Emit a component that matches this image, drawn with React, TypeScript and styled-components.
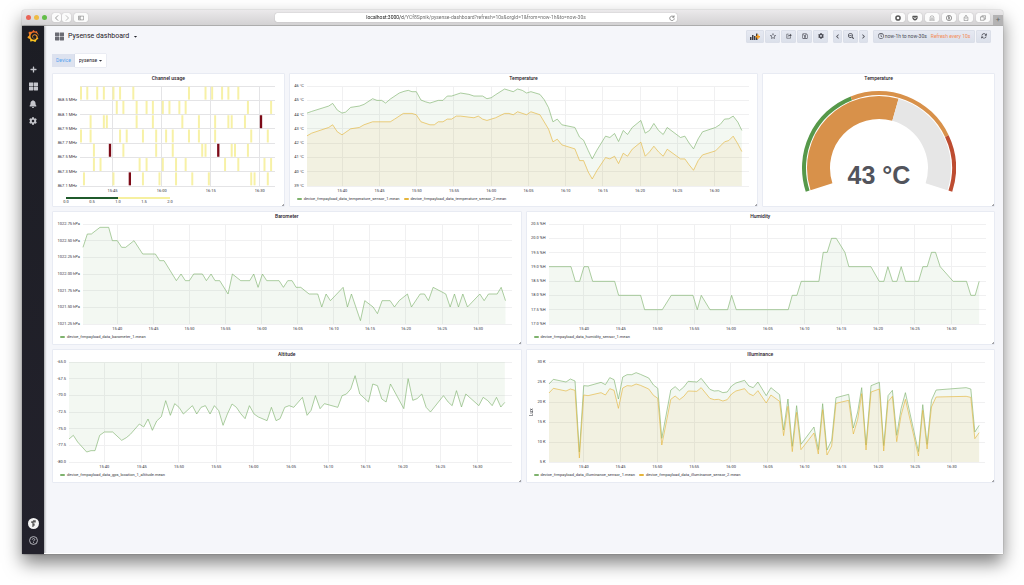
import React from "react";
import styled, { createGlobalStyle } from "styled-components";
import {
  FaBell,
  FaCaretDown,
  FaChevronLeft,
  FaChevronRight,
  FaCog,
  FaGetPocket,
  FaPlus,
  FaRegClock,
  FaRegSave,
  FaRegStar,
  FaSearchMinus,
  FaThLarge,
} from "react-icons/fa";
import { FaArrowsRotate } from "react-icons/fa6";
import { SiGrafana } from "react-icons/si";

const GlobalStyle = createGlobalStyle`
  *, *::before, *::after { box-sizing: border-box; }
  html, body { margin: 0; background: #fff; }
  body { font-family: Roboto, "Liberation Sans", sans-serif; color: #33343c; }
  button, input, select { font: inherit; color: inherit; margin: 0; padding: 0; }
  button { cursor: pointer; }
  a { color: inherit; }
  svg { display: block; flex: none; }
`;

/* ---------- browser window ---------- */

const Desktop = styled.div`
  display: flex;
  min-height: 100vh;
  padding: 10px 21px 31px 22px;
`;

const Window = styled.div`
  flex: 1;
  min-width: 0;
  display: flex;
  flex-direction: column;
  border-radius: 3px 3px 0 0;
  background: #f5f6fa;
  box-shadow: 0 0 1px rgba(0, 0, 0, 0.6), 0 9px 18px rgba(0, 0, 0, 0.5);
`;

const TitleBar = styled.header`
  display: grid;
  grid-template-columns: 253fr 402fr 326fr;
  align-items: center;
  height: 16px;
  border-bottom: 1px solid #adadad;
  border-radius: 3px 3px 0 0;
  background: linear-gradient(#ebe9eb, #d3d2d3);
`;

const BarGroup = styled.div<{ $end?: boolean }>`
  display: flex;
  align-items: center;
  align-self: stretch;
  gap: 3px;
  padding-left: 4px;
  justify-content: ${(p) => (p.$end ? "flex-end" : "flex-start")};
`;

const Light = styled.button<{ $color: string }>`
  width: 5px;
  height: 5px;
  border: 0;
  border-radius: 50%;
  background: ${(p) => p.$color};
`;

const NavPair = styled.div`
  display: flex;
  gap: 1px;
  margin: 0 0 0 2px;
`;

const ChromeButton = styled.button<{ $w?: number }>`
  display: flex;
  align-items: center;
  justify-content: center;
  width: ${(p) => p.$w ?? 14}px;
  height: 9px;
  border: 0;
  border-radius: 2px;
  background: #fbfbfb;
  color: #555;
  box-shadow: 0 0 1px rgba(0, 0, 0, 0.3);
`;

const NewTab = styled.button`
  align-self: flex-end;
  width: 10px;
  height: 10px;
  border: 0;
  background: #b4b3b4;
  color: #666;
  font-size: 8px;
  line-height: 10px;
`;

const AddressBar = styled.div`
  display: flex;
  align-items: center;
  height: 9px;
  padding: 0 2px 0 8px;
  border-radius: 2px;
  background: #fff;
  box-shadow: 0 0 1px rgba(0, 0, 0, 0.35);
`;

const Address = styled.input`
  flex: 1;
  min-width: 0;
  height: 9px;
  border: 0;
  text-align: center;
  font-size: 5px;
  line-height: 9px;
  background: linear-gradient(90deg, #111 calc(50% - 73px), #666 calc(50% - 73px));
  background-clip: text;
  -webkit-background-clip: text;
  -webkit-text-fill-color: transparent;
`;

const ReloadButton = styled.button`
  border: 0;
  background: none;
  color: #555;
`;

const Glyph = ({ size = 6, width = 1.6, children }: { size?: number; width?: number; children: React.ReactNode }) => (
  <svg width={size} height={size} viewBox="0 0 16 16" fill="none" stroke="currentColor" strokeWidth={width} aria-hidden="true">
    {children}
  </svg>
);

/* ---------- side menu ---------- */

const Body = styled.div`
  flex: 1;
  display: flex;
`;

const SideMenu = styled.nav`
  display: flex;
  flex-direction: column;
  justify-content: space-between;
  width: 22px;
  padding: 3px 0 8px;
  background: linear-gradient(#1c1d24, #23222c);
  box-shadow: 1px 0 2px rgba(0, 0, 0, 0.35);
  color: #c4c5cb;
`;

const MenuGroup = styled.div`
  display: flex;
  flex-direction: column;
  align-items: center;
  gap: 6px;
`;

const MenuLink = styled.a`
  display: flex;
  align-items: center;
  justify-content: center;
  width: 22px;
  height: 11px;
`;

const LogoLink = styled(MenuLink)`
  height: 14px;
  margin-bottom: 15px;
`;

const Avatar = styled.span`
  display: flex;
  align-items: center;
  justify-content: center;
  width: 11px;
  height: 11px;
  border-radius: 50%;
  background: #f4f4f4;
  color: #555;
`;

/* ---------- dashboard header ---------- */

const Main = styled.main`
  flex: 1;
  min-width: 0;
  padding: 0 8px;
  border-bottom: 1px solid #fff;
`;

const PageHeader = styled.div`
  display: flex;
  align-items: center;
  justify-content: space-between;
  height: 20px;
  padding: 0 4px 0 3px;
`;

const DashboardPicker = styled.button`
  display: flex;
  align-items: center;
  gap: 4px;
  border: 0;
  background: none;
  font-size: 7px;
  line-height: 12px;
  color: #1f2028;
`;

const Toolbar = styled.div`
  display: flex;
  gap: 5px;
`;

const ToolGroup = styled.div`
  display: flex;
  gap: 1px;
`;

const ToolButton = styled.button<{ $w?: number }>`
  display: flex;
  align-items: center;
  justify-content: center;
  gap: 1px;
  min-width: ${(p) => p.$w ?? 15}px;
  height: 13px;
  border: 1px solid #dbdfe9;
  border-radius: 1px;
  background: linear-gradient(#e6e9f2, #dbe0ea);
  color: #4a4b54;
  font-size: 5px;
  white-space: nowrap;
`;

const RefreshNote = styled.span`
  margin-left: 3px;
  color: #f58b54;
`;

const Variables = styled.div`
  display: flex;
  width: max-content;
  margin: 8px 0 6px;
  font-size: 5px;
  line-height: 13px;
`;

const VariableLabel = styled.label`
  padding: 0 4px;
  background: #dde2ef;
  color: #55a3ef;
`;

const VariableValue = styled.div`
  display: flex;
  align-items: center;
  padding: 0 3px 0 4px;
  background: #fff;
  box-shadow: 0 0 1px #b9bfd0;
`;

const VariableSelect = styled.select`
  appearance: none;
  border: 0;
  background: none;
  line-height: 13px;
  color: #1f2028;
`;

/* ---------- panels ---------- */

const PanelGrid = styled.div`
  display: grid;
  grid-template-columns: repeat(4, minmax(0, 1fr));
  grid-auto-rows: 134px;
  gap: 4px;
`;

const PanelBox = styled.section<{ $span: number }>`
  position: relative;
  grid-column: span ${(p) => p.$span};
  border: 1px solid #e8ebf3;
  border-radius: 1px;
  background: #fff;
`;

const PanelTitle = styled.h2`
  margin: 0;
  padding-bottom: 3px;
  text-align: center;
  font-size: 5px;
  line-height: 9px;
  font-weight: 500;
  color: #1f2028;
`;

const ResizeCorner = styled.span`
  position: absolute;
  right: 0;
  bottom: 0;
  width: 2px;
  height: 2px;
  border-right: 1px solid #a4a4a8;
  border-bottom: 1px solid #a4a4a8;
`;

const Panel = ({ title, span, children }: { title: string; span: number; children: React.ReactNode }) => (
  <PanelBox $span={span}>
    <PanelTitle>{title}</PanelTitle>
    {children}
    <ResizeCorner />
  </PanelBox>
);

const ChartRow = styled.div`
  display: flex;
  padding-right: 9px;
`;

const YAxis = styled.div<{ $w: number }>`
  display: flex;
  flex-direction: column;
  align-items: flex-end;
  justify-content: space-between;
  width: ${(p) => p.$w}px;
  height: 108px;
  margin: -4px 0;
  padding-right: 3px;
  font-size: 4px;
  line-height: 8px;
  white-space: nowrap;

  span { height: 8px; }
`;

const AxisName = styled.div`
  width: 8px;
  height: 100px;
  margin-right: -8px;
  writing-mode: vertical-rl;
  transform: rotate(180deg);
  text-align: center;
  font-size: 5px;
  line-height: 8px;
`;

const Plot = styled.svg`
  flex: 1 1 0;
  min-width: 0;
  height: 109px;
  overflow: visible;

  text {
    font-size: 4px;
    text-anchor: middle;
    fill: #33343c;
  }
`;

const Legend = styled.div`
  display: flex;
  gap: 4px;
  padding: 0 0 0 7px;
`;

const LegendItem = styled.button<{ $color: string }>`
  display: flex;
  align-items: center;
  gap: 2px;
  border: 0;
  background: none;
  font-size: 4px;
  line-height: 8px;
  color: #33343c;

  &::before {
    content: "";
    width: 5px;
    height: 2px;
    border-radius: 1px;
    background: ${(p) => p.$color};
  }
`;

type Bounds = { x0: number; x1: number; y0: number; y1: number };
type Series = { name: string; color: string; points: string };

const GREEN = "#7eb26d";
const YELLOW = "#e5b53c";
const TIMES = ["15:40", "15:45", "15:50", "15:55", "16:00", "16:05", "16:10", "16:15", "16:20", "16:25", "16:30"];

type GridProps = { b: Bounds; rows: number; ticks: number[]; color?: string };

const GridLines = ({ b, rows, ticks, color = "#f0f0f1" }: GridProps) => (
  <g stroke={color} strokeWidth="1" shapeRendering="crispEdges">
    {Array.from({ length: rows + 1 }, (_, i) => {
      const y = b.y0 + (i * (b.y1 - b.y0)) / rows;
      return <line key={i} x1={b.x0} x2={b.x1} y1={y} y2={y} vectorEffect="non-scaling-stroke" />;
    })}
    {ticks.map((x) => (
      <line key={x} x1={x} x2={x} y1={b.y0} y2={b.y1} vectorEffect="non-scaling-stroke" />
    ))}
  </g>
);

const TimeLabels = ({ b, ticks, labels }: { b: Bounds; ticks: number[]; labels: string[] }) => (
  <>
    {ticks.map((x, i) => (
      <text key={x} x={`${((x - b.x0) / (b.x1 - b.x0)) * 100}%`} y="106">
        {labels[i]}
      </text>
    ))}
  </>
);

type ChartProps = {
  bounds: Bounds;
  axisWidth: number;
  axisName?: string;
  yLabels: string[];
  firstTick: number;
  tickStep: number;
  series: Series[];
  fillUp?: boolean;
};

const LineChart = ({ bounds: b, axisWidth, axisName, yLabels, firstTick, tickStep, series, fillUp }: ChartProps) => {
  const ticks = TIMES.map((_, i) => firstTick + i * tickStep);
  const base = fillUp ? b.y0 : b.y1;
  return (
    <>
      <ChartRow>
        {axisName && <AxisName>{axisName}</AxisName>}
        <YAxis $w={axisWidth}>
          {yLabels.map((l) => (
            <span key={l}>{l}</span>
          ))}
        </YAxis>
        <Plot>
          <svg width="100%" height="100" viewBox={`${b.x0} ${b.y0} ${b.x1 - b.x0} ${b.y1 - b.y0}`} preserveAspectRatio="none" overflow="visible">
            <GridLines b={b} rows={yLabels.length - 1} ticks={ticks} />
            {series.map((s) => {
              const pts = s.points.split(" ");
              const first = pts[0].split(",")[0];
              const last = pts[pts.length - 1].split(",")[0];
              return (
                <g key={s.name}>
                  <polygon points={`${first},${base} ${s.points} ${last},${base}`} fill={s.color} fillOpacity="0.09" />
                  <polyline points={s.points} fill="none" stroke={s.color} strokeOpacity="0.8" strokeWidth="0.8" vectorEffect="non-scaling-stroke" />
                </g>
              );
            })}
          </svg>
          <TimeLabels b={b} ticks={ticks} labels={TIMES} />
        </Plot>
      </ChartRow>
      <Legend>
        {series.map((s) => (
          <LegendItem key={s.name} $color={s.color}>
            {s.name}
          </LegendItem>
        ))}
      </Legend>
    </>
  );
};

/* ---------- heat map ---------- */

const HEAT_BOUNDS: Bounds = { x0: 117, x1: 705, y0: 57, y1: 359 };
const HEAT_LABELS = ["", "868.5 MHz", "868.1 MHz", "867.9 MHz", "867.7 MHz", "867.5 MHz", "867.3 MHz", "867.1 MHz"];
const HEAT_TICKS = [215, 364, 512, 660];
const HEAT_ROWS = [
  [120, 139, 169, 189, 218, 238, 278, 446, 496, 516, 546, 565, 595],
  [228, 248, 288, 318, 337, 367, 387, 417, 436, 624, 694],
  [149, 189, 198, 288, 337, 426, 476, 525, 565, 575, 615],
  [120, 149, 238, 258, 307, 347, 377, 397, 446, 476, 525, 634, 684],
  [159, 248, 347, 397, 486, 496, 575, 585, 624],
  [159, 179, 297, 318, 367, 407, 436, 555, 595, 674, 694],
  [129, 218, 307, 357, 407, 456, 506, 634, 644, 684],
];
const HEAT_PEAKS: [number, number][] = [
  [2, 664],
  [4, 208],
  [4, 535],
  [6, 268],
];

const Scale = styled.div`
  width: 104px;
  margin: 2px 0 0 13px;
  font-size: 4px;
  line-height: 6px;
`;

const ScaleBar = styled.div`
  height: 2px;
  background: linear-gradient(90deg, #1f5a2b 50%, #f6f0a0 50%);
`;

const ScaleLabels = styled.div`
  display: flex;
  justify-content: space-between;
  margin: 0 -4px;

  span {
    width: 8px;
    text-align: center;
  }
`;

const HeatMap = () => {
  const b = HEAT_BOUNDS;
  const rowH = (b.y1 - b.y0) / HEAT_ROWS.length;
  return (
    <>
      <ChartRow>
        <YAxis $w={27}>
          {HEAT_LABELS.map((l) => (
            <span key={l}>{l}</span>
          ))}
        </YAxis>
        <Plot>
          <svg width="100%" height="100" viewBox={`${b.x0} ${b.y0} ${b.x1 - b.x0} ${b.y1 - b.y0}`} preserveAspectRatio="none" overflow="visible">
            <GridLines b={b} rows={7} ticks={HEAT_TICKS} color="#e4e4e6" />
            {HEAT_ROWS.map((row, r) =>
              row.map((x) => <rect key={`${r}-${x}`} x={x - 3} y={b.y0 + r * rowH + 2} width="6" height={rowH - 4} fill="#f7f1a6" />)
            )}
            {HEAT_PEAKS.map(([r, x]) => (
              <rect key={x} x={x - 4} y={b.y0 + r * rowH + 2} width="7" height={rowH - 4} fill="#7c0a17" />
            ))}
          </svg>
          <TimeLabels b={b} ticks={HEAT_TICKS} labels={["15:45", "16:00", "16:15", "16:30"]} />
        </Plot>
      </ChartRow>
      <Scale>
        <ScaleBar />
        <ScaleLabels>
          {["0.0", "0.5", "1.0", "1.5", "2.0"].map((v) => (
            <span key={v}>{v}</span>
          ))}
        </ScaleLabels>
      </Scale>
    </>
  );
};

/* ---------- gauge ---------- */

const GaugeBox = styled.div`
  display: flex;
  justify-content: center;
  padding-top: 5px;

  text {
    font-family: "Liberation Sans", Arial, sans-serif;
    font-size: 25px;
    font-weight: 700;
    text-anchor: middle;
    fill: #52545c;
  }
`;

/* Ring segment between two fractions of the 216 degree sweep. */
const arc = (from: number, to: number, inner: number, outer: number) => {
  const at = (f: number, r: number) => {
    const a = ((162 + f * 216) * Math.PI) / 180;
    return `${(77 + r * Math.cos(a)).toFixed(2)} ${(77 + r * Math.sin(a)).toFixed(2)}`;
  };
  const large = (to - from) * 216 > 180 ? 1 : 0;
  return `M${at(from, outer)}A${outer} ${outer} 0 ${large} 1 ${at(to, outer)}L${at(to, inner)}A${inner} ${inner} 0 ${large} 0 ${at(from, inner)}Z`;
};

const Gauge = () => (
  <GaugeBox>
    <svg width="154" height="104" viewBox="0 0 154 104" role="img" aria-label="43 °C">
      <path d={arc(0, 0.4, 73, 77)} fill="#56984a" />
      <path d={arc(0.4, 0.8, 73, 77)} fill="#d8914a" />
      <path d={arc(0.8, 1, 73, 77)} fill="#bd4c31" />
      <path d={arc(0, 0.573, 49, 72)} fill="#d8914a" />
      <path d={arc(0.573, 1, 49, 72)} fill="#e6e6e6" />
      <text x="77" y="93">43 °C</text>
    </svg>
  </GaugeBox>
);

/* ---------- series ---------- */

const TEMP_1 =
  "66,135 80,130 131,114 143,106 157,126 171,135 182,132 197,118 223,114 237,109 263,92 276,97 290,97 302,105 316,93 343,75 357,70 370,67 381,71 394,71 408,96 421,101 435,105 460,97 474,97 487,84 500,84 527,75 552,79 567,84 593,84 606,92 619,89 632,80 659,63 672,67 685,71 698,63 712,67 725,75 738,71 765,79 778,95 791,119 804,161 817,153 831,170 870,178 884,207 896,216 910,247 922,272 936,246 962,204 975,208 989,196 1001,220 1015,187 1028,199 1042,178 1068,157 1081,195 1094,187 1107,166 1121,187 1135,199 1147,178 1187,208 1200,204 1213,225 1226,242 1240,212 1253,191 1292,178 1306,169 1319,153 1332,152 1345,144 1359,162 1371,187";
const TEMP_2 =
  "66,203 80,195 131,178 143,170 157,191 171,200 197,182 223,178 237,170 263,161 316,161 329,153 355,136 381,136 394,140 408,161 435,170 448,170 460,161 474,161 487,153 500,153 514,144 527,144 567,149 580,144 593,153 606,157 619,153 632,149 659,136 672,136 685,140 698,131 725,140 738,131 765,140 791,183 804,221 817,213 831,230 870,242 884,277 896,277 910,311 922,332 936,307 962,268 975,272 989,264 1001,286 1015,255 1028,264 1042,243 1068,222 1081,264 1094,251 1107,234 1121,251 1135,264 1147,243 1187,272 1200,272 1213,290 1226,306 1240,277 1253,260 1292,248 1319,221 1332,217 1345,204 1359,227 1371,250";
const BAROMETER =
  "130,127 143,87 155,87 181,67 207,67 218,107 233,107 246,127 258,127 283,107 309,147 347,147 360,167 373,167 410,227 424,207 437,227 449,227 462,207 488,207 500,227 514,207 526,227 540,227 565,267 578,207 603,227 630,227 642,207 655,247 668,207 681,227 718,227 731,247 744,227 757,227 769,247 783,247 808,267 834,267 846,306 859,267 872,287 910,247 923,306 935,267 962,347 975,287 1000,306 1013,326 1027,287 1051,287 1064,306 1078,287 1103,267 1115,306 1141,267 1154,267 1166,287 1180,247 1218,267 1231,306 1244,267 1256,306 1269,267 1283,306 1320,267 1333,287 1346,267 1372,267 1384,247 1397,287";
const HUMIDITY =
  "100,185 166,185 179,229 192,229 205,185 218,185 231,229 297,229 309,271 375,271 387,314 440,314 467,271 532,271 545,314 557,271 583,314 636,314 648,271 662,314 818,314 830,271 844,271 857,229 910,229 923,142 935,142 948,100 962,100 988,142 1000,185 1066,185 1091,229 1105,229 1117,185 1131,229 1144,229 1157,185 1170,229 1209,229 1222,185 1235,185 1248,142 1260,142 1274,185 1313,229 1353,229 1366,271 1379,271 1391,229";
const ALTITUDE =
  "88,281 101,270 114,290 141,320 154,316 166,316 180,270 194,260 219,260 246,285 260,277 272,267 299,236 312,245 325,221 338,255 351,227 365,214 378,166 392,210 405,175 418,186 431,206 458,181 471,206 484,186 497,181 511,206 524,181 537,196 550,240 563,206 577,176 590,186 603,205 616,220 629,181 643,206 656,215 682,226 695,186 709,226 721,220 735,186 748,181 762,186 788,156 802,210 814,195 827,151 841,190 854,175 894,186 907,151 920,146 933,131 946,91 960,146 986,170 999,116 1013,121 1026,161 1039,170 1052,116 1092,190 1105,100 1119,165 1132,160 1146,146 1159,186 1172,200 1211,151 1225,170 1237,181 1250,136 1265,185 1278,146 1317,181 1330,156 1344,166 1357,181 1370,156 1383,185 1395,171";
const LUX_1 =
  "102,116 115,102 153,110 166,101 180,107 193,320 206,121 219,122 258,111 271,118 284,97 297,103 310,161 323,95 336,88 350,88 363,82 376,87 401,98 415,119 428,129 440,279 467,134 480,124 493,136 506,125 519,108 545,110 558,99 584,132 597,137 610,136 623,142 636,140 649,122 662,113 688,105 701,122 714,127 728,110 753,151 767,127 793,148 805,254 818,161 831,303 844,181 857,297 896,245 909,313 922,175 935,314 949,285 962,157 1000,147 1014,248 1027,200 1039,127 1052,299 1067,121 1092,111 1105,301 1118,151 1131,135 1144,270 1157,190 1170,142 1209,319 1222,178 1235,297 1248,165 1262,134 1352,127 1366,131 1378,260 1391,240";
const LUX_2 =
  "102,143 115,129 153,137 166,131 180,135 193,338 206,149 219,151 258,142 271,149 284,130 297,135 310,189 323,128 336,121 350,122 363,116 376,120 401,131 415,150 428,159 440,299 467,162 480,152 493,163 506,153 519,137 545,138 558,127 584,159 597,163 610,162 623,167 636,163 649,146 662,137 688,130 701,145 714,151 728,136 753,173 767,149 793,168 805,271 818,183 831,319 844,201 857,313 896,263 909,326 922,193 935,329 949,302 962,174 1000,165 1014,266 1027,222 1039,145 1052,314 1067,140 1092,131 1105,317 1118,169 1131,153 1144,289 1157,210 1170,162 1209,332 1222,195 1235,311 1248,185 1262,155 1352,153 1366,156 1378,280 1391,262";

/* ---------- page ---------- */

const BrowserBar = () => (
  <TitleBar>
    <BarGroup>
      <Light $color="#ea6457" aria-label="Close" />
      <Light $color="#eebb45" aria-label="Minimize" />
      <Light $color="#62bd48" aria-label="Zoom" />
      <NavPair>
        <ChromeButton $w={9} aria-label="Back"><Glyph><path d="M11 1 4 8l7 7" /></Glyph></ChromeButton>
        <ChromeButton $w={9} aria-label="Forward"><Glyph width={1}><path d="M5 1l7 7-7 7" /></Glyph></ChromeButton>
      </NavPair>
      <ChromeButton aria-label="Show sidebar">
        <Glyph width={1.2}><path d="M1 3h14v10H1zM6 3v10M2 6h3M2 9h3" /></Glyph>
      </ChromeButton>
    </BarGroup>
    <AddressBar>
      <Address
        aria-label="Address"
        defaultValue="localhost:3000/d/YCf8Spnik/pysense-dashboard?refresh=10s&orgId=1&from=now-1h&to=now-30s"
      />
      <ReloadButton aria-label="Reload">
        <Glyph><path d="M13 5.500A6 6 0 1 0 14 9M13.500 1v5h-5" /></Glyph>
      </ReloadButton>
    </AddressBar>
    <BarGroup $end>
      <ChromeButton aria-label="Blocker"><Glyph width={4}><circle cx="8" cy="8" r="5.500" /></Glyph></ChromeButton>
      <ChromeButton aria-label="Save to Pocket"><FaGetPocket size={6} /></ChromeButton>
      <ChromeButton aria-label="Notifier">
        <Glyph width={1}><path d="M3 14V7a5 5 0 0 1 10 0v7M1 14h14M5 8h6M5 11h6" /></Glyph>
      </ChromeButton>
      <ChromeButton aria-label="Passwords"><Glyph><circle cx="8" cy="8" r="7" /><path d="M8 4v8M6.500 5.500 8 4" strokeWidth="3" /></Glyph></ChromeButton>
      <ChromeButton aria-label="Share"><Glyph width={1.2}><path d="M5 6H3v9h10V6h-2M8 11V1M5 4l3-3 3 3" /></Glyph></ChromeButton>
      <ChromeButton aria-label="Tabs"><Glyph width={1.2}><path d="M1 5h10v9H1zM5 5V2h10v9h-4" /></Glyph></ChromeButton>
      <NewTab aria-label="New tab">+</NewTab>
    </BarGroup>
  </TitleBar>
);

const Sidebar = () => (
  <SideMenu aria-label="Main menu">
    <MenuGroup>
      <LogoLink href="#home" aria-label="Home">
        <svg width="0" height="0" aria-hidden="true">
          <linearGradient id="flame" x1="0" y1="1" x2="0" y2="0">
            <stop offset="0" stopColor="#fbd01e" />
            <stop offset="1" stopColor="#ee5a29" />
          </linearGradient>
        </svg>
        <SiGrafana size={12} fill="url(#flame)" />
      </LogoLink>
      <MenuLink href="#create" aria-label="Create"><FaPlus size={7} /></MenuLink>
      <MenuLink href="#dashboards" aria-label="Dashboards"><FaThLarge size={9} /></MenuLink>
      <MenuLink href="#alerting" aria-label="Alerting"><FaBell size={8} /></MenuLink>
      <MenuLink href="#configuration" aria-label="Configuration"><FaCog size={8} /></MenuLink>
    </MenuGroup>
    <MenuGroup>
      <MenuLink href="#profile" aria-label="Profile">
        <Avatar><Glyph size={9} width={2}><path d="M7 14V5M7 3h4v2H7v3M5 4v3M9 8v4" /></Glyph></Avatar>
      </MenuLink>
      <MenuLink href="#help" aria-label="Help">
        <Glyph size={9}>
          <circle cx="8" cy="8" r="7" />
          <path d="M5.800 6.400C6 3.800 10.400 4 10.200 6.500 10 8 8 8 8 9.600M8 11v1.600" />
        </Glyph>
      </MenuLink>
    </MenuGroup>
  </SideMenu>
);

const Header = () => (
  <PageHeader>
    <DashboardPicker>
      <FaThLarge size={9} color="#6a6b73" />
      Pysense dashboard
      <FaCaretDown size={5} />
    </DashboardPicker>
    <Toolbar>
      <ToolGroup>
        <ToolButton $w={18} aria-label="Add panel">
          <svg width="10" height="7" viewBox="0 0 20 14" aria-hidden="true">
            <path d="M0 14V8h3v6zM4 14V4h3v10zM8 14V6h3v8zM12 14V1h3v13z" fill="#3d3e47" />
            <path d="M15.500 3v9M11 7.500h9" stroke="#f39a1f" strokeWidth="3" />
          </svg>
        </ToolButton>
        <ToolButton aria-label="Mark as favorite"><FaRegStar size={6} /></ToolButton>
        <ToolButton aria-label="Share dashboard">
          <Glyph width={1.6}>
            <path d="M7 3H2v11h10v-4" />
            <path d="M5 10c0-4 3-5 6-5V2l4 4-4 4V7C8 7 6 7.500 5 10z" fill="currentColor" strokeWidth="0.5" />
          </Glyph>
        </ToolButton>
        <ToolButton aria-label="Save dashboard">
          <FaRegSave size={6} />
        </ToolButton>
        <ToolButton aria-label="Settings"><FaCog size={6} /></ToolButton>
      </ToolGroup>
      <ToolGroup>
        <ToolButton $w={9} aria-label="Earlier"><FaChevronLeft size={5} /></ToolButton>
        <ToolButton aria-label="Zoom out"><FaSearchMinus size={6} /></ToolButton>
        <ToolButton $w={9} aria-label="Later"><FaChevronRight size={5} /></ToolButton>
      </ToolGroup>
      <ToolGroup>
        <ToolButton $w={102}>
          <FaRegClock size={6} />
          now-1h to now-30s
          <RefreshNote>Refresh every 10s</RefreshNote>
        </ToolButton>
        <ToolButton aria-label="Refresh"><FaArrowsRotate size={6} /></ToolButton>
      </ToolGroup>
    </Toolbar>
  </PageHeader>
);

export default function App() {
  return (
    <>
      <GlobalStyle />
      <Desktop>
        <Window>
          <BrowserBar />
          <Body>
            <Sidebar />
            <Main>
              <Header />
              <Variables>
                <VariableLabel htmlFor="device">Device</VariableLabel>
                <VariableValue>
                  <VariableSelect id="device" defaultValue="pysense">
                    <option>pysense</option>
                  </VariableSelect>
                  <FaCaretDown size={5} />
                </VariableValue>
              </Variables>
              <PanelGrid>
                <Panel title="Channel usage" span={1}>
                  <HeatMap />
                </Panel>
                <Panel title="Temperature" span={2}>
                  <LineChart
                    bounds={{ x0: 66, x1: 1391, y0: 54, y1: 353 }}
                    axisWidth={17}
                    yLabels={["46 °C", "45 °C", "44 °C", "43 °C", "42 °C", "41 °C", "40 °C", "39 °C"]}
                    firstTick={172}
                    tickStep={111.7}
                    series={[
                      { name: "device_frmpayload_data_temperature_sensor_1.mean", color: GREEN, points: TEMP_1 },
                      { name: "device_frmpayload_data_temperature_sensor_2.mean", color: YELLOW, points: TEMP_2 },
                    ]}
                  />
                </Panel>
                <Panel title="Temperature" span={1}>
                  <Gauge />
                </Panel>
                <Panel title="Barometer" span={2}>
                  <LineChart
                    bounds={{ x0: 130, x1: 1415, y0: 57, y1: 357 }}
                    axisWidth={30}
                    yLabels={["1022.75 hPa", "1022.50 hPa", "1022.25 hPa", "1022.00 hPa", "1021.75 hPa", "1021.50 hPa", "1021.25 hPa"]}
                    firstTick={233}
                    tickStep={108.2}
                    series={[{ name: "device_frmpayload_data_barometer_1.mean", color: GREEN, points: BAROMETER }]}
                  />
                </Panel>
                <Panel title="Humidity" span={2}>
                  <LineChart
                    bounds={{ x0: 100, x1: 1410, y0: 57, y1: 357 }}
                    axisWidth={22}
                    yLabels={["20.5 %H", "20.0 %H", "19.5 %H", "19.0 %H", "18.5 %H", "18.0 %H", "17.5 %H", "17.0 %H"]}
                    firstTick={205}
                    tickStep={110.3}
                    series={[{ name: "device_frmpayload_data_humidity_sensor_1.mean", color: GREEN, points: HUMIDITY }]}
                  />
                </Panel>
                <Panel title="Altitude" span={2}>
                  <LineChart
                    bounds={{ x0: 88, x1: 1415, y0: 50, y1: 350 }}
                    axisWidth={16}
                    yLabels={["-65.0", "-67.5", "-70.0", "-72.5", "-75.0", "-77.5", "-80.0"]}
                    firstTick={194}
                    tickStep={111.9}
                    series={[{ name: "device_frmpayload_data_gps_location_1_altitude.mean", color: GREEN, points: ALTITUDE }]}
                    fillUp
                  />
                </Panel>
                <Panel title="Illuminance" span={2}>
                  <LineChart
                    bounds={{ x0: 102, x1: 1410, y0: 50, y1: 350 }}
                    axisWidth={22}
                    axisName="Lux"
                    yLabels={["30 K", "25 K", "20 K", "15 K", "10 K", "5 K"]}
                    firstTick={206}
                    tickStep={110.3}
                    series={[
                      { name: "device_frmpayload_data_illuminance_sensor_1.mean", color: GREEN, points: LUX_1 },
                      { name: "device_frmpayload_data_illuminance_sensor_2.mean", color: YELLOW, points: LUX_2 },
                    ]}
                  />
                </Panel>
              </PanelGrid>
            </Main>
          </Body>
        </Window>
      </Desktop>
    </>
  );
}
